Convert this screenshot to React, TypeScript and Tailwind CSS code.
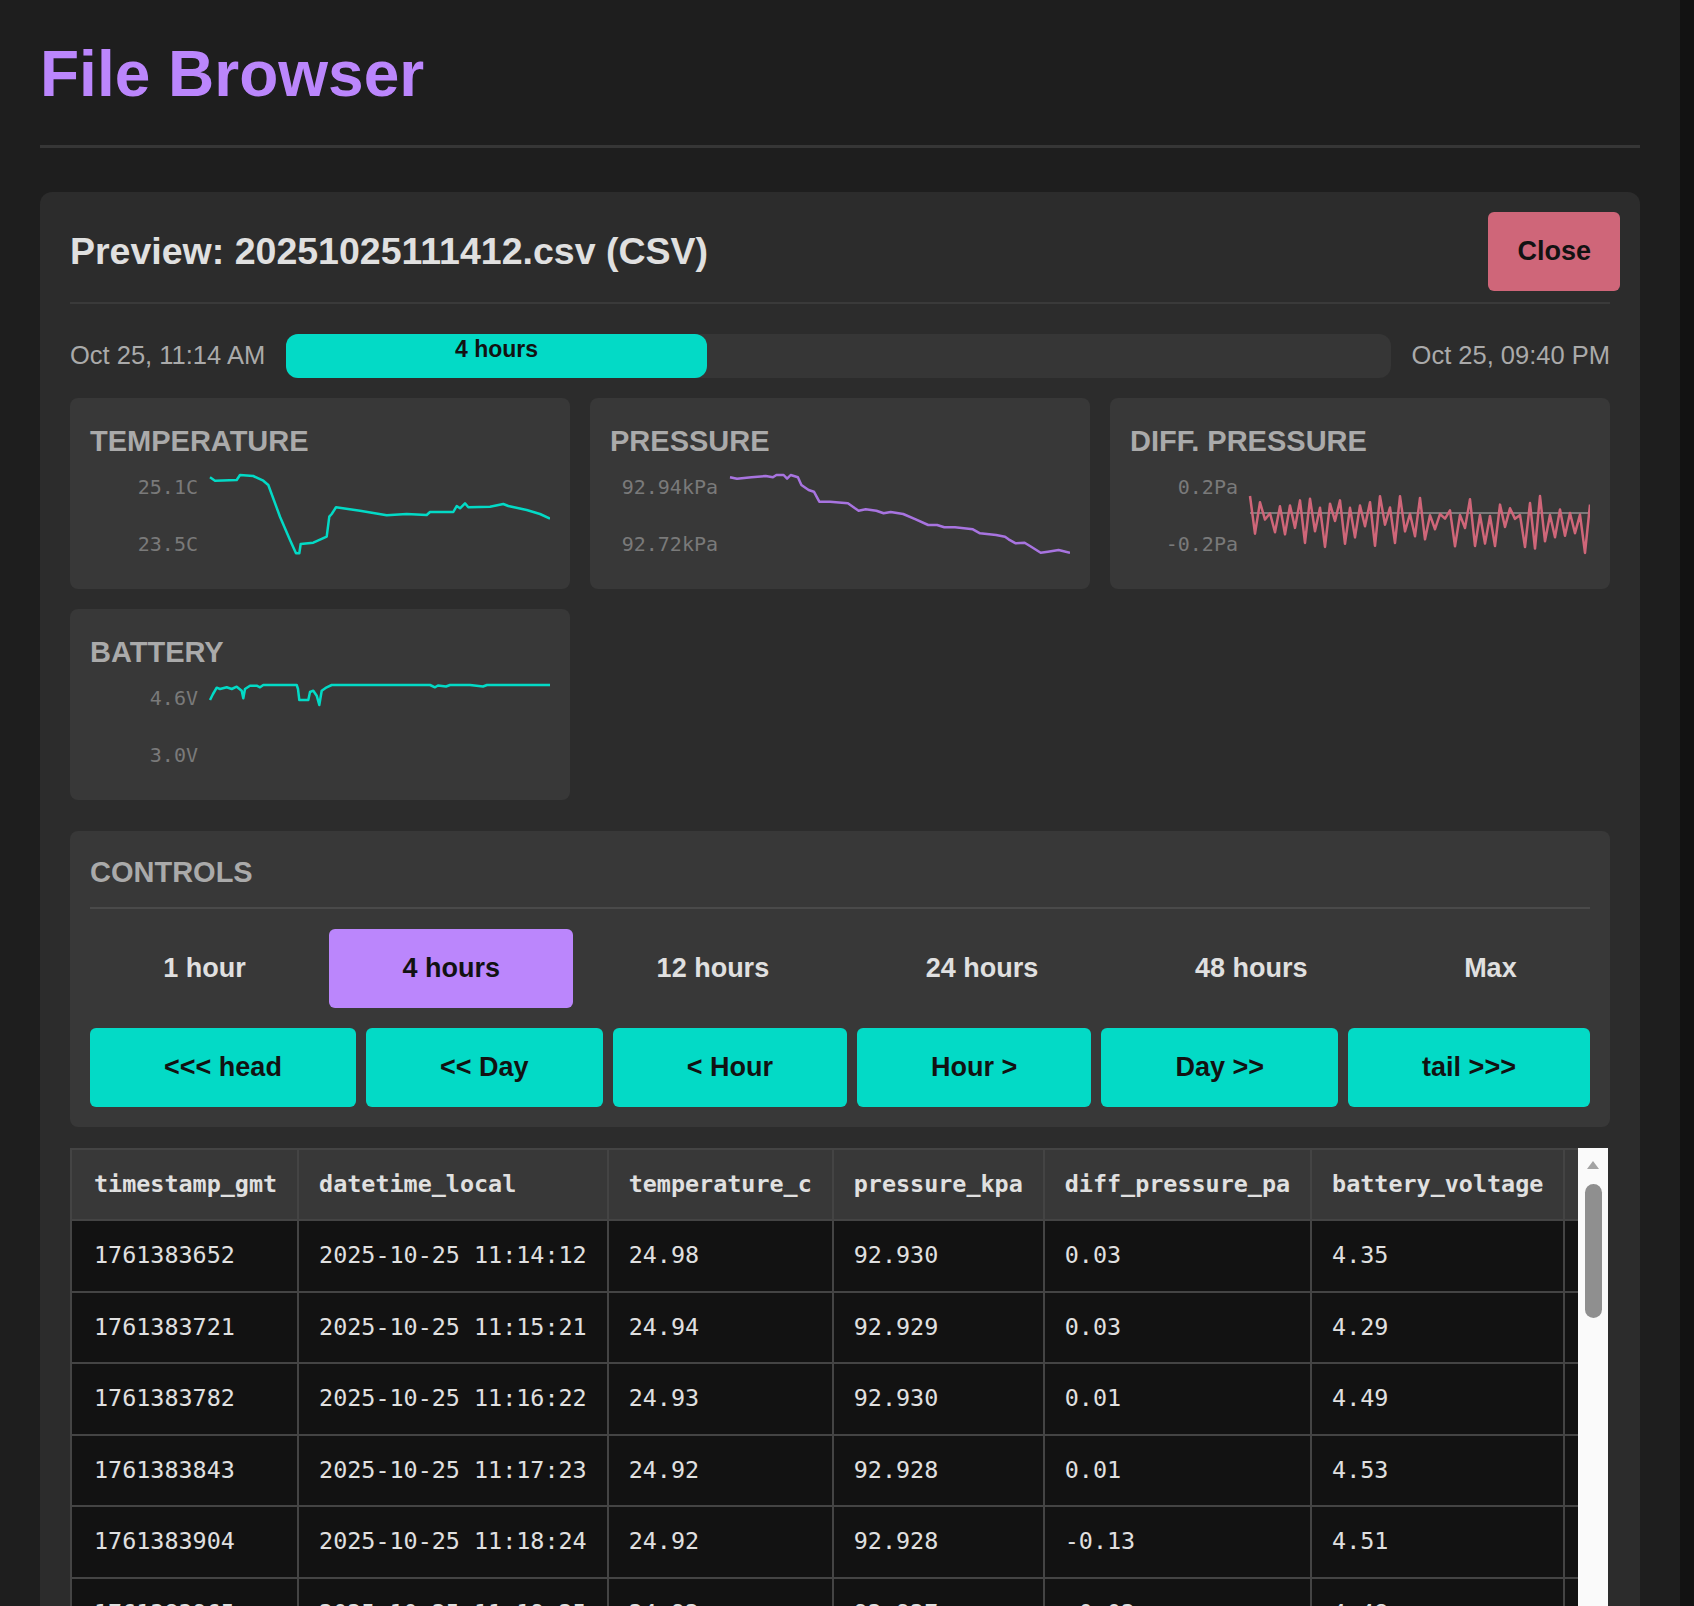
import React from "react";

// line chart points, in svg coords (svg is 460x101, plot starts at x=120)
const tempPts: [number, number][] = [
  [120, 9.3], [125, 12.7], [146.7, 12], [150, 7], [163.3, 8], [173.3, 12.7], [178.3, 17],
  [190, 48.7], [200, 72], [206, 85.3], [209.3, 85.3], [210.7, 76], [223.3, 74.7], [236.7, 68.7],
  [239.3, 48.7], [241.7, 46], [246, 39.3], [270, 42.7], [296.7, 47.3], [316.7, 46], [336.7, 47],
  [340, 44], [363.3, 44], [366.7, 38], [370, 40.3], [375, 35.3], [378.3, 39.3], [400, 38.7],
  [413.3, 36], [418.3, 38], [436.7, 42], [450, 46], [460, 50.7],
];

const pressPts: [number, number][] = [
  [120, 9.3], [127, 10.7], [141.4, 9.3], [155.7, 8], [162.9, 9.3], [166.4, 7], [173.6, 7],
  [177.1, 10.7], [180.7, 7], [187.9, 9.3], [191.4, 17], [198.6, 22], [203.9, 23.7], [209.3, 33.7],
  [220, 33.7], [237.9, 35.3], [245, 40.3], [248.6, 42.7], [255.7, 41.3], [266.4, 42.7],
  [273.6, 45.3], [280.7, 44], [293.2, 46], [305.7, 51.3], [318.2, 57], [327.1, 57], [334.3, 59.3],
  [345, 59.3], [362.9, 61.3], [370, 65.3], [386.1, 67], [395, 68.7], [398.6, 71.3], [405.7, 75.3],
  [414.6, 74.7], [420, 78], [430.7, 84.7], [437.9, 83.7], [448.6, 82], [460, 84.7],
];

const battPts: [number, number][] = [
  [120, 21], [123, 15], [126.7, 8.7], [130, 10], [136.7, 8.3], [141.7, 10], [146.7, 7.7],
  [151.7, 11.7], [153.3, 19.3], [155, 10], [160, 6.7], [166.7, 6.7], [170, 8.3], [173.3, 6],
  [176.7, 6], [206.7, 6], [208, 10], [209.3, 21], [218.3, 21], [220, 13], [223.3, 11.7],
  [226.7, 16.7], [229.3, 26], [231.7, 11.7], [236.7, 8.3], [241.7, 6], [340, 6], [345, 8.3],
  [348, 6.5], [356, 7.5], [360, 6], [380, 6], [393, 7.5], [397, 6], [460, 6],
];

let seed = 11;
const rnd = () => {
  seed = (seed * 16807) % 2147483647;
  return (seed - 1) / 2147483646;
};
const diffPts: [number, number][] = Array.from({ length: 69 }, (_, i) => {
  const x = 120 + i * 5;
  const y = i % 2 === 0 ? 28 + rnd() * 20 : 50 + rnd() * 35;
  return [x, y] as [number, number];
});

const toStr = (p: [number, number][]) => p.map(([x, y]) => `${x},${y}`).join(" ");

interface ChartProps {
  title: string;
  top: string;
  bottom: string;
  color: string;
  points: [number, number][];
  zero?: boolean;
}

const Chart = ({ title, top, bottom, color, points, zero }: ChartProps) => (
  <div className="bg-[#383838] rounded-[8px] px-[20px] pt-[27px] pb-[20px]">
    <h3 className="text-[29px] leading-[32px] font-bold text-[#aaaaaa]">{title}</h3>
    <svg className="block mt-[11px]" width="460" height="101" viewBox="0 0 460 101">
      <g fontFamily="'DejaVu Sans Mono', monospace" fontSize="20" fill="#7a7a7a" textAnchor="end">
        <text x="108" y="26">{top}</text>
        <text x="108" y="83">{bottom}</text>
      </g>
      {zero && <line x1="120" y1="45" x2="460" y2="45" stroke="#7a7a7a" strokeWidth="2" />}
      <polyline
        points={toStr(points)}
        fill="none"
        stroke={color}
        strokeWidth="2.5"
        strokeLinejoin="round"
      />
    </svg>
  </div>
);

const ranges = ["1 hour", "4 hours", "12 hours", "24 hours", "48 hours", "Max"];
const navs = ["<<< head", "<< Day", "< Hour", "Hour >", "Day >>", "tail >>>"];

const cols = ["timestamp_gmt", "datetime_local", "temperature_c", "pressure_kpa", "diff_pressure_pa", "battery_voltage"];
const rows = [
  ["1761383652", "2025-10-25 11:14:12", "24.98", "92.930", "0.03", "4.35"],
  ["1761383721", "2025-10-25 11:15:21", "24.94", "92.929", "0.03", "4.29"],
  ["1761383782", "2025-10-25 11:16:22", "24.93", "92.930", "0.01", "4.49"],
  ["1761383843", "2025-10-25 11:17:23", "24.92", "92.928", "0.01", "4.53"],
  ["1761383904", "2025-10-25 11:18:24", "24.92", "92.928", "-0.13", "4.51"],
  ["1761383965", "2025-10-25 11:19:25", "24.92", "92.927", "-0.02", "4.48"],
];

const App = () => {
  return (
    <div className="flex h-[1606px] overflow-hidden bg-[#1e1e1e] font-['Liberation_Sans',Arial,sans-serif]">
      <main className="flex-1 min-w-0 px-[40px]">
        <header className="pt-[38px] pb-[33px] border-b-[3px] border-[#363636]">
          <h1 className="text-[64px] leading-[1.15] font-bold text-[#bb86fc]">File Browser</h1>
        </header>

        <section className="mt-[44px] bg-[#2c2c2c] rounded-[12px] px-[30px] pt-[20px]">
          <div className="flex items-center justify-between -mr-[10px]">
            <h2 className="text-[37.5px] font-bold text-[#e0e0e0]">Preview: 20251025111412.csv (CSV)</h2>
            <button className="h-[79px] px-[29px] rounded-[6px] bg-[#cf6679] text-[27px] font-bold text-[#121212]">
              Close
            </button>
          </div>
          <div className="mt-[11px] h-[2px] bg-[#3a3a3a]" />

          <div className="mt-[30px] flex items-center gap-[21px]">
            <span className="text-[25.5px] text-[#aaaaaa] whitespace-nowrap">Oct 25, 11:14 AM</span>
            <div className="flex-1 h-[44px] rounded-[12px] bg-[#363636]">
              <div className="w-[38.1%] h-full rounded-[12px] bg-[#03dac6] pt-[2px] text-center text-[23px] leading-[26px] font-bold text-[#121212]">
                4 hours
              </div>
            </div>
            <span className="text-[25.5px] text-[#aaaaaa] whitespace-nowrap">Oct 25, 09:40 PM</span>
          </div>

          <div className="mt-[20px] grid grid-cols-3 gap-[20px]">
            <Chart title="TEMPERATURE" top="25.1C" bottom="23.5C" color="#03dac6" points={tempPts} />
            <Chart title="PRESSURE" top="92.94kPa" bottom="92.72kPa" color="#a874e0" points={pressPts} />
            <Chart title="DIFF. PRESSURE" top="0.2Pa" bottom="-0.2Pa" color="#cf6679" points={diffPts} zero />
            <Chart title="BATTERY" top="4.6V" bottom="3.0V" color="#03dac6" points={battPts} />
          </div>

          <div className="mt-[31px] bg-[#383838] rounded-[8px] px-[20px] pt-[25px] pb-[20px]">
            <h3 className="text-[29px] leading-[32px] font-bold text-[#aaaaaa]">CONTROLS</h3>
            <div className="mt-[19px] h-[2px] bg-[#4a4a4a]" />
            <div className="mt-[20px] flex gap-[10px]">
              {ranges.map((r, i) => (
                <button
                  key={r}
                  className={
                    i === 1
                      ? "flex-auto h-[79px] px-[72px] rounded-[6px] bg-[#bb86fc] text-[27px] font-bold text-[#121212] whitespace-nowrap"
                      : "flex-auto h-[79px] px-[72px] rounded-[6px] text-[27px] font-bold text-[#e0e0e0] whitespace-nowrap"
                  }
                >
                  {r}
                </button>
              ))}
            </div>
            <div className="mt-[20px] flex gap-[10px]">
              {navs.map((n) => (
                <button
                  key={n}
                  className="flex-auto h-[79px] px-[72px] rounded-[6px] bg-[#03dac6] text-[27px] font-bold text-[#121212] whitespace-nowrap"
                >
                  {n}
                </button>
              ))}
            </div>
          </div>

          <div className="mt-[21px] flex">
            <div className="flex-1 min-w-0 overflow-hidden">
              <table className="border-collapse font-['DejaVu_Sans_Mono',monospace] text-[23.4px] text-[#e0e0e0]">
                <thead>
                  <tr>
                    {cols.map((c, j) => (
                      <th
                        key={c}
                        className={
                          j === 0
                            ? "border-2 border-[#444444] bg-[#383838] pl-[22px] pr-[20px] py-[20px] leading-[29.5px] text-left font-bold whitespace-nowrap"
                            : "border-2 border-[#444444] bg-[#383838] px-[20px] py-[20px] leading-[29.5px] text-left font-bold whitespace-nowrap"
                        }
                      >
                        {c}
                      </th>
                    ))}
                    <th className="border-2 border-[#444444] bg-[#383838] px-[20px] py-[20px] leading-[29.5px] min-w-[200px]" />
                  </tr>
                </thead>
                <tbody>
                  {rows.map((r) => (
                    <tr key={r[0]}>
                      {r.map((v, j) => (
                        <td
                          key={j}
                          className={
                            j === 0
                              ? "border-2 border-[#444444] bg-[#121212] pl-[22px] pr-[20px] py-[20px] leading-[29.5px] whitespace-nowrap"
                              : "border-2 border-[#444444] bg-[#121212] px-[20px] py-[20px] leading-[29.5px] whitespace-nowrap"
                          }
                        >
                          {v}
                        </td>
                      ))}
                      <td className="border-2 border-[#444444] bg-[#121212] px-[20px] py-[20px] leading-[29.5px]" />
                    </tr>
                  ))}
                </tbody>
              </table>
            </div>
            <div className="w-[30px] mr-[2px] shrink-0 bg-[#fafafa] flex flex-col items-center pt-[13px]">
              <div className="w-0 h-0 border-x-[6px] border-x-transparent border-b-[8px] border-b-[#a3a3a3]" />
              <div className="mt-[15px] w-[17px] h-[134px] rounded-full bg-[#8f8f8f]" />
            </div>
          </div>
        </section>
      </main>
      <div className="w-[14px] shrink-0 bg-[#121212]" />
    </div>
  );
};

export default App;
